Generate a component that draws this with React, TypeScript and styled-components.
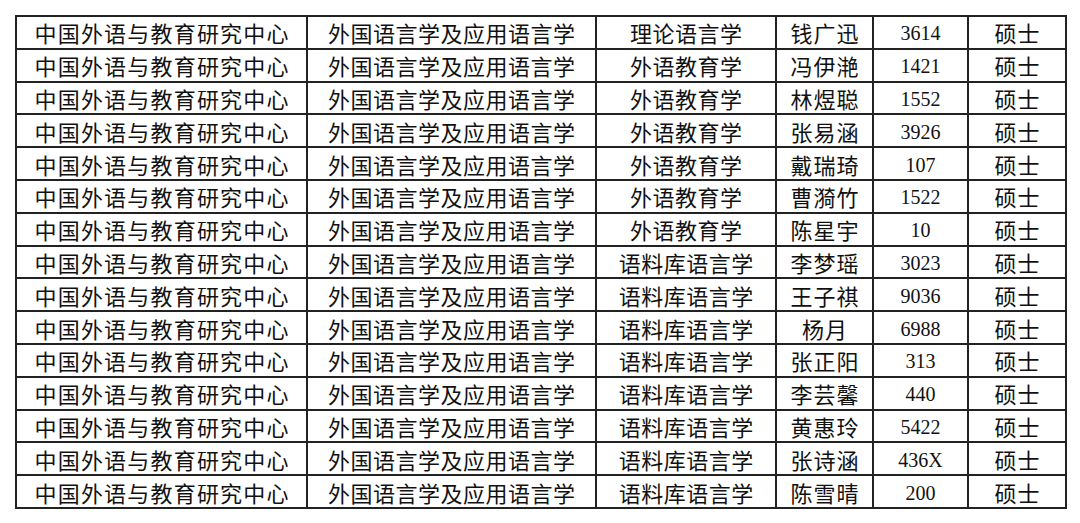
import React from "react"
import styled, { createGlobalStyle } from "styled-components"

const GlobalStyle = createGlobalStyle`
    html, body {
        margin: 0;
        padding: 0;
        background: #fff;
    }
    body {
        font-family: "Liberation Serif", "Noto Sans CJK SC", serif;
        color: #111;
    }
`

const Page = styled.div`
    padding: 15px 0 0 15px;
    width: 1080px;
    height: 523px;
    box-sizing: border-box;
`

const Table = styled.table`
    border-collapse: collapse;
    table-layout: fixed;
    width: 1050px;
    border: 2px solid #1a1a1a;
`

const Row = styled.tr`
    height: 32.8px;
`

const Cell = styled.td<{ $spacing?: number; $num?: boolean }>`
    border: 2px solid #222;
    padding: ${p => (p.$num ? 2 : 0)}px 0 0 ${p => p.$spacing ?? 0}px;
    text-align: center;
    vertical-align: middle;
    white-space: nowrap;
    overflow: hidden;
    font-size: ${p => (p.$num ? 20 : 22)}px;
    font-weight: 400;
    line-height: 1;
    letter-spacing: ${p => p.$spacing ?? 0}px;
    font-family: ${p => (p.$num ? `"Liberation Serif", serif` : `"Noto Sans CJK SC", sans-serif`)};
`

const widths = [291, 289, 180, 97, 95, 98]

type Entry = [string, string, string, string]

const rows: Entry[] = [
    ["理论语言学", "钱广迅", "3614", "硕士"],
    ["外语教育学", "冯伊滟", "1421", "硕士"],
    ["外语教育学", "林煜聪", "1552", "硕士"],
    ["外语教育学", "张易涵", "3926", "硕士"],
    ["外语教育学", "戴瑞琦", "107", "硕士"],
    ["外语教育学", "曹漪竹", "1522", "硕士"],
    ["外语教育学", "陈星宇", "10", "硕士"],
    ["语料库语言学", "李梦瑶", "3023", "硕士"],
    ["语料库语言学", "王子祺", "9036", "硕士"],
    ["语料库语言学", "杨月", "6988", "硕士"],
    ["语料库语言学", "张正阳", "313", "硕士"],
    ["语料库语言学", "李芸馨", "440", "硕士"],
    ["语料库语言学", "黄惠玲", "5422", "硕士"],
    ["语料库语言学", "张诗涵", "436X", "硕士"],
    ["语料库语言学", "陈雪晴", "200", "硕士"],
]

export default function App() {
    return (
        <Page>
            <GlobalStyle />
            <Table>
                <colgroup>
                    {widths.map((w, i) => (
                        <col key={i} style={{ width: w }} />
                    ))}
                </colgroup>
                <tbody>
                    {rows.map(([major, name, num, degree], i) => (
                        <Row key={i}>
                            <Cell $spacing={1.2}>中国外语与教育研究中心</Cell>
                            <Cell $spacing={0.5}>外国语言学及应用语言学</Cell>
                            <Cell $spacing={0.5}>{major}</Cell>
                            <Cell $spacing={1}>{name}</Cell>
                            <Cell $num>{num}</Cell>
                            <Cell $spacing={1}>{degree}</Cell>
                        </Row>
                    ))}
                </tbody>
            </Table>
        </Page>
    )
}
